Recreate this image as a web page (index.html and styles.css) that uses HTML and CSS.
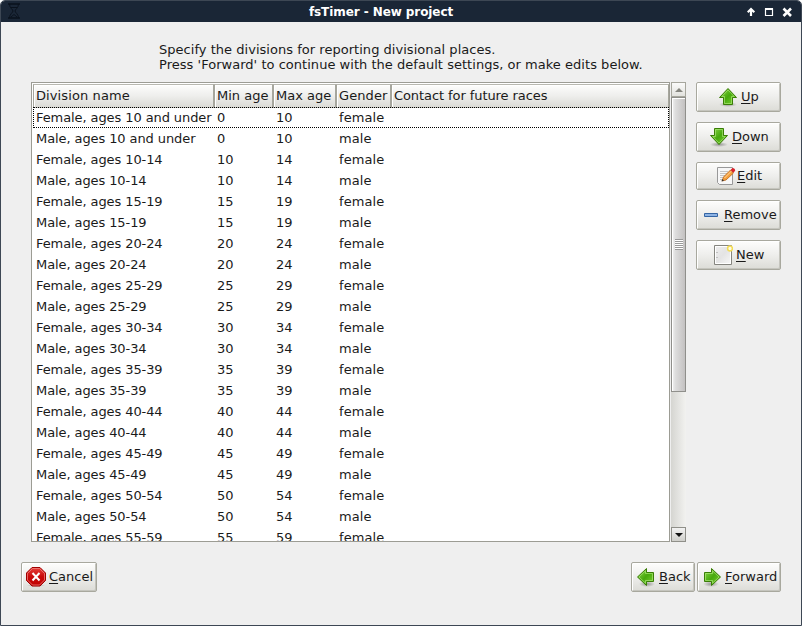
FILE: index.html
```html
<!DOCTYPE html>
<html lang="en">
<head>
<meta charset="utf-8">
<title>fsTimer - New project</title>
<link rel="stylesheet" href="styles.css">
</head>
<body>
<svg width="0" height="0" class="defs">
  <defs>
    <linearGradient id="green" x1="0" y1="0" x2="1" y2="1"><stop offset="0" stop-color="#8fdc4e"/><stop offset=".5" stop-color="#47a80c"/><stop offset="1" stop-color="#7ed636"/></linearGradient>
    <radialGradient id="shade"><stop offset="0" stop-color="#000" stop-opacity=".35"/><stop offset="1" stop-color="#000" stop-opacity="0"/></radialGradient>
    <linearGradient id="red" x1="0" y1="0" x2="0" y2="1"><stop offset="0" stop-color="#e8413c"/><stop offset=".5" stop-color="#c90b0b"/><stop offset="1" stop-color="#c00000"/></linearGradient>
    <linearGradient id="paper" x1="0" y1="0" x2="1" y2="1"><stop offset="0" stop-color="#eee"/><stop offset=".5" stop-color="#e4e4e4"/><stop offset="1" stop-color="#f8f8f8"/></linearGradient>
  </defs>
</svg>
<div class="window">
  <header class="titlebar">
    <svg class="app-icon" width="14" height="21" viewBox="0 0 14 21" fill="none" stroke="#0a121d"><path d="M1 3H13M1 17H13" stroke-width="1.500"/><path d="M2.500 3C2.500 7 6 8.500 6 10S2.500 13 2.500 17M11.500 3C11.500 7 8 8.500 8 10S11.500 13 11.500 17M4 6.500H10M4 16L7 13.500L10 16"/></svg>
    <h1>fsTimer - New project</h1>
    <svg class="controls" width="46" height="21" viewBox="0 0 46 21" fill="none" stroke="#fff"><path d="M4 15V9M.700 11.300L4 8L7.300 11.300" stroke-width="2.200"/><path d="M18.500 8H25.500V14.500H18.500Z" stroke-width="1.200"/><path d="M18 8H26" stroke-width="2"/><path d="M36.500 7.500L44 15M44 7.500L36.500 15" stroke-width="2.600"/></svg>
  </header>
  <main>
    <p class="intro">Specify the divisions for reporting divisional places.<br>Press 'Forward' to continue with the default settings, or make edits below.</p>
    <div class="content">
      <div class="list">
        <div class="row head"><span>Division name</span><span>Min age</span><span>Max age</span><span>Gender</span><span>Contact for future races</span></div>
        <div id="rows"></div>
      </div>
      <div class="scrollbar">
        <div class="step"><svg width="8" height="4"><path d="M0 4L4 0L8 4Z" fill="#85857f"/></svg></div>
        <div class="thumb"><i></i></div>
        <div class="trough"></div>
        <div class="step down"><svg width="8" height="4"><path d="M0 0H8L4 4Z" fill="#111"/></svg></div>
      </div>
      <div class="actions">
        <button class="up"><svg width="20" height="20" viewBox="0 0 20 20"><ellipse cx="10" cy="17.500" rx="9" ry="2.500" fill="url(#shade)"/><path d="M10 1.500L18.500 10.500H14.500V17.500H5.500V10.500H1.500Z" fill="url(#green)" stroke="#3a7d06"/><path d="M10 3L16.200 9.500H13.500V16.500H6.500V9.500H3.800Z" fill="none" stroke="#b5ec84" stroke-opacity=".6"/></svg><span><u>U</u>p</span></button>
        <button class="dn"><svg width="20" height="20" viewBox="0 0 20 20"><ellipse cx="10" cy="17.500" rx="9" ry="2.500" fill="url(#shade)"/><path d="M10 17.500L18.500 8.500H14.500V1.500H5.500V8.500H1.500Z" fill="url(#green)" stroke="#3a7d06"/><path d="M10 16L16.200 9.500H13.500V2.500H6.500V9.500H3.800Z" fill="none" stroke="#b5ec84" stroke-opacity=".6"/></svg><span><u>D</u>own</span></button>
        <button class="edit"><svg width="20" height="20" viewBox="0 0 20 20"><path d="M1.500 1.500H16.500V18.500H3.500L1.500 16.500Z" fill="#f7f7f7" stroke="#999" stroke-linejoin="round"/><path d="M4 5.500H12M4 7.500H11M4 9.500H9M4 11.500H8M4 13.500H6" stroke="#c4c4c4"/><path d="M6 15L7.500 11L14.500 4L17.500 7L10 14Z" fill="#f5a03c" stroke="#b8641a" stroke-width=".8"/><path d="M8.500 12L15.500 5" stroke="#ffd49b"/><path d="M14.500 4L16.500 2Q19 2 19.200 4.800L17.300 6.800Z" fill="#d8232a"/><path d="M5.500 15.500L6.500 13L8 14.500Z" fill="#333"/></svg><span><u>E</u>dit</span></button>
        <button class="remove"><svg width="20" height="20" viewBox="0 0 20 20"><path d="M3.500 8.500H16.500V11.500H3.500Z" fill="#8db3e4" stroke="#3465a4" stroke-linejoin="round"/></svg><span><u>R</u>emove</span></button>
        <button class="new"><svg width="20" height="20" viewBox="0 0 20 20"><path d="M1.500 .500H18.500V19.500H1.500Z" fill="url(#paper)" stroke="#85857f" stroke-linejoin="round"/><path d="M2.500 1.500H17.500V18.500H2.500Z" fill="none" stroke="#fff"/><path d="M4 7V8M4 12V13" stroke="#999"/><circle cx="17" cy="3.500" r="2.400" fill="#fffce0" stroke="#f3dc55" stroke-width="1.500"/></svg><span><u>N</u>ew</span></button>
      </div>
    </div>
    <footer>
      <button class="cancel"><svg width="20" height="20" viewBox="0 0 20 20"><ellipse cx="10" cy="18.500" rx="9" ry="1.500" fill="url(#shade)"/><path d="M6 .500H14L19.500 6V13.500L14 19H6L.500 13.500V6Z" fill="url(#red)" stroke="#a00000"/><path d="M6.500 1.500H13.500L18.500 6.500V13L13.500 18H6.500L1.500 13V6.500Z" fill="none" stroke="#f28a87" stroke-opacity=".7"/><path d="M6.500 6L13.500 13.500M13.500 6L6.500 13.500" stroke="#fff" stroke-width="2"/></svg><span><u>C</u>ancel</span></button>
      <button class="back"><svg width="20" height="20" viewBox="0 0 20 20"><ellipse cx="11" cy="17" rx="8" ry="3" fill="url(#shade)"/><path d="M1.500 10L10.500 1.500V5.500H17.500V14.500H10.500V18.500Z" fill="url(#green)" stroke="#3a7d06"/><path d="M3 10L9.500 3.800V6.500H16.500V13.500H9.500V16.200Z" fill="none" stroke="#b5ec84" stroke-opacity=".6"/></svg><span><u>B</u>ack</span></button>
      <button class="forward"><svg width="20" height="20" viewBox="0 0 20 20"><ellipse cx="9" cy="17" rx="8" ry="3" fill="url(#shade)"/><path d="M18.500 10L9.500 1.500V5.500H2.500V14.500H9.500V18.500Z" fill="url(#green)" stroke="#3a7d06"/><path d="M17 10L10.500 3.800V6.500H3.500V13.500H10.500V16.200Z" fill="none" stroke="#b5ec84" stroke-opacity=".6"/></svg><span><u>F</u>orward</span></button>
    </footer>
  </main>
</div>
<script src="app.js"></script>
</body>
</html>
```
FILE: styles.css
```css
* { box-sizing: border-box; }
body { margin: 0; background: #fff; font: 13px/15px "DejaVu Sans", sans-serif; color: #1a1a1a; }
.defs { position: absolute; }
.window { width: 802px; height: 626px; border: 1px solid #3d4754; border-radius: 5px 5px 0 0; background: #efefef; overflow: hidden; }
.titlebar { height: 21px; background: #1a2636; color: #fff; display: flex; align-items: center; padding: 0 8px 0 6px; }
.titlebar h1 { flex: 1; margin: 0; text-align: center; font-size: 12px; line-height: 21px; letter-spacing: -.08px; padding: 2px 6px 0 0; }
.app-icon { display: block; }
.controls { display: block; }
.intro { margin: 0; padding: 20px 0 0 158px; height: 60px; white-space: nowrap; letter-spacing: .03px; }
.content { display: flex; height: 460px; padding-left: 30px; }
.list { width: 639px; height: 460px; border: 1px solid #9c9c94; padding: 1px 0 0 1px; background: #fff; overflow: hidden; }
.row { display: grid; grid-template-columns: 181px 59px 63px 55px 278px; width: 636px; height: 21px; line-height: 21px; white-space: nowrap; }
.row span { padding-left: 3px; }
.row span:first-child { letter-spacing: -.09px; }
.row span:nth-child(4) { letter-spacing: .1px; }
.head { height: 23px; line-height: 23px; }
.head span { background: linear-gradient(#fdfdfc, #eeeeec 50%, #dbdbd6); border: 1px solid #a6a69d; border-top-color: #b8b8b0; border-bottom-color: #c5c5bd; padding-left: 2px; line-height: 22px; box-shadow: inset 1px 1px #fff; }
.head span:first-child { letter-spacing: .1px; }
.head span:last-child { letter-spacing: -.08px; }
#rows .row:first-child { outline: 1px dotted #000; outline-offset: -1px; }
.scrollbar { width: 15px; margin-left: 1px; display: flex; flex-direction: column; }
.step { height: 15px; border: 1px solid #a6a69d; background: linear-gradient(#fafafa, #e2e2de); display: flex; align-items: center; justify-content: center; }
.step.down { border-color: #8f8f89; background: linear-gradient(#f2f2f2, #cfcfcb); }
.thumb { height: 295px; border: 1px solid #8f8f8b; background: linear-gradient(90deg, #f4f4f4, #dedede 25%, #c3c1c1); box-shadow: inset 1px 1px #fff; display: flex; align-items: center; justify-content: center; }
.thumb i { width: 8px; height: 11px; background: repeating-linear-gradient(#999 0 1px, #fff 1px 2px); }
.trough { flex: 1; background: linear-gradient(90deg, #d5d5d1, #f2f2f0); }
.actions { width: 85px; margin-left: 10px; display: flex; flex-direction: column; gap: 10px; }
button { height: 30px; margin: 0; padding: 0; font: inherit; color: #1a1a1a; border: 1px solid #a8a89e; border-radius: 2px; background: linear-gradient(#fdfdfc, #eeeeec 50%, #dcdcd7); box-shadow: inset 1px 1px #fff, inset -1px -1px #c5c5be; display: flex; align-items: center; }
button svg { flex: none; }
button span { padding-bottom: 2px; }
button u { text-decoration: underline; text-decoration-thickness: 1px; text-underline-offset: 2px; }
.up { padding-left: 21px; } .up span { margin-left: 3px; }
.dn { padding-left: 12px; } .dn span { margin-left: 3px; }
.edit { height: 28px; padding-left: 19px; } .edit span { margin-left: 1px; }
.remove { padding-left: 4px; } .remove span { margin-left: 3px; }
.new { padding-left: 16px; } .new span { margin-left: 3px; }
footer { display: flex; margin: 20px 20px 0; }
.cancel { width: 76px; padding-left: 4px; } .cancel span { margin-left: 3px; }
.back { width: 64px; margin-left: auto; padding-left: 4px; } .back span { margin-left: 3px; }
.forward { width: 84px; margin-left: 2px; padding-left: 4px; } .forward span { margin-left: 3px; }
```
FILE: app.js
```js
const rows = document.getElementById('rows');
function addRow(cells) {
  const row = document.createElement('div');
  row.className = 'row';
  for (const text of cells) {
    const cell = document.createElement('span');
    cell.textContent = text;
    row.append(cell);
  }
  rows.append(row);
}
for (let min = 5; min <= 55; min += 5) {
  const first = min === 5;
  const max = min + (first ? 5 : 4);
  const ages = first ? '10 and under' : `${min}-${max}`;
  for (const gender of ['Female', 'Male']) {
    if (min === 55 && gender === 'Male') break;
    addRow([`${gender}, ages ${ages}`, first ? 0 : min, max, gender.toLowerCase(), '']);
  }
}
```
